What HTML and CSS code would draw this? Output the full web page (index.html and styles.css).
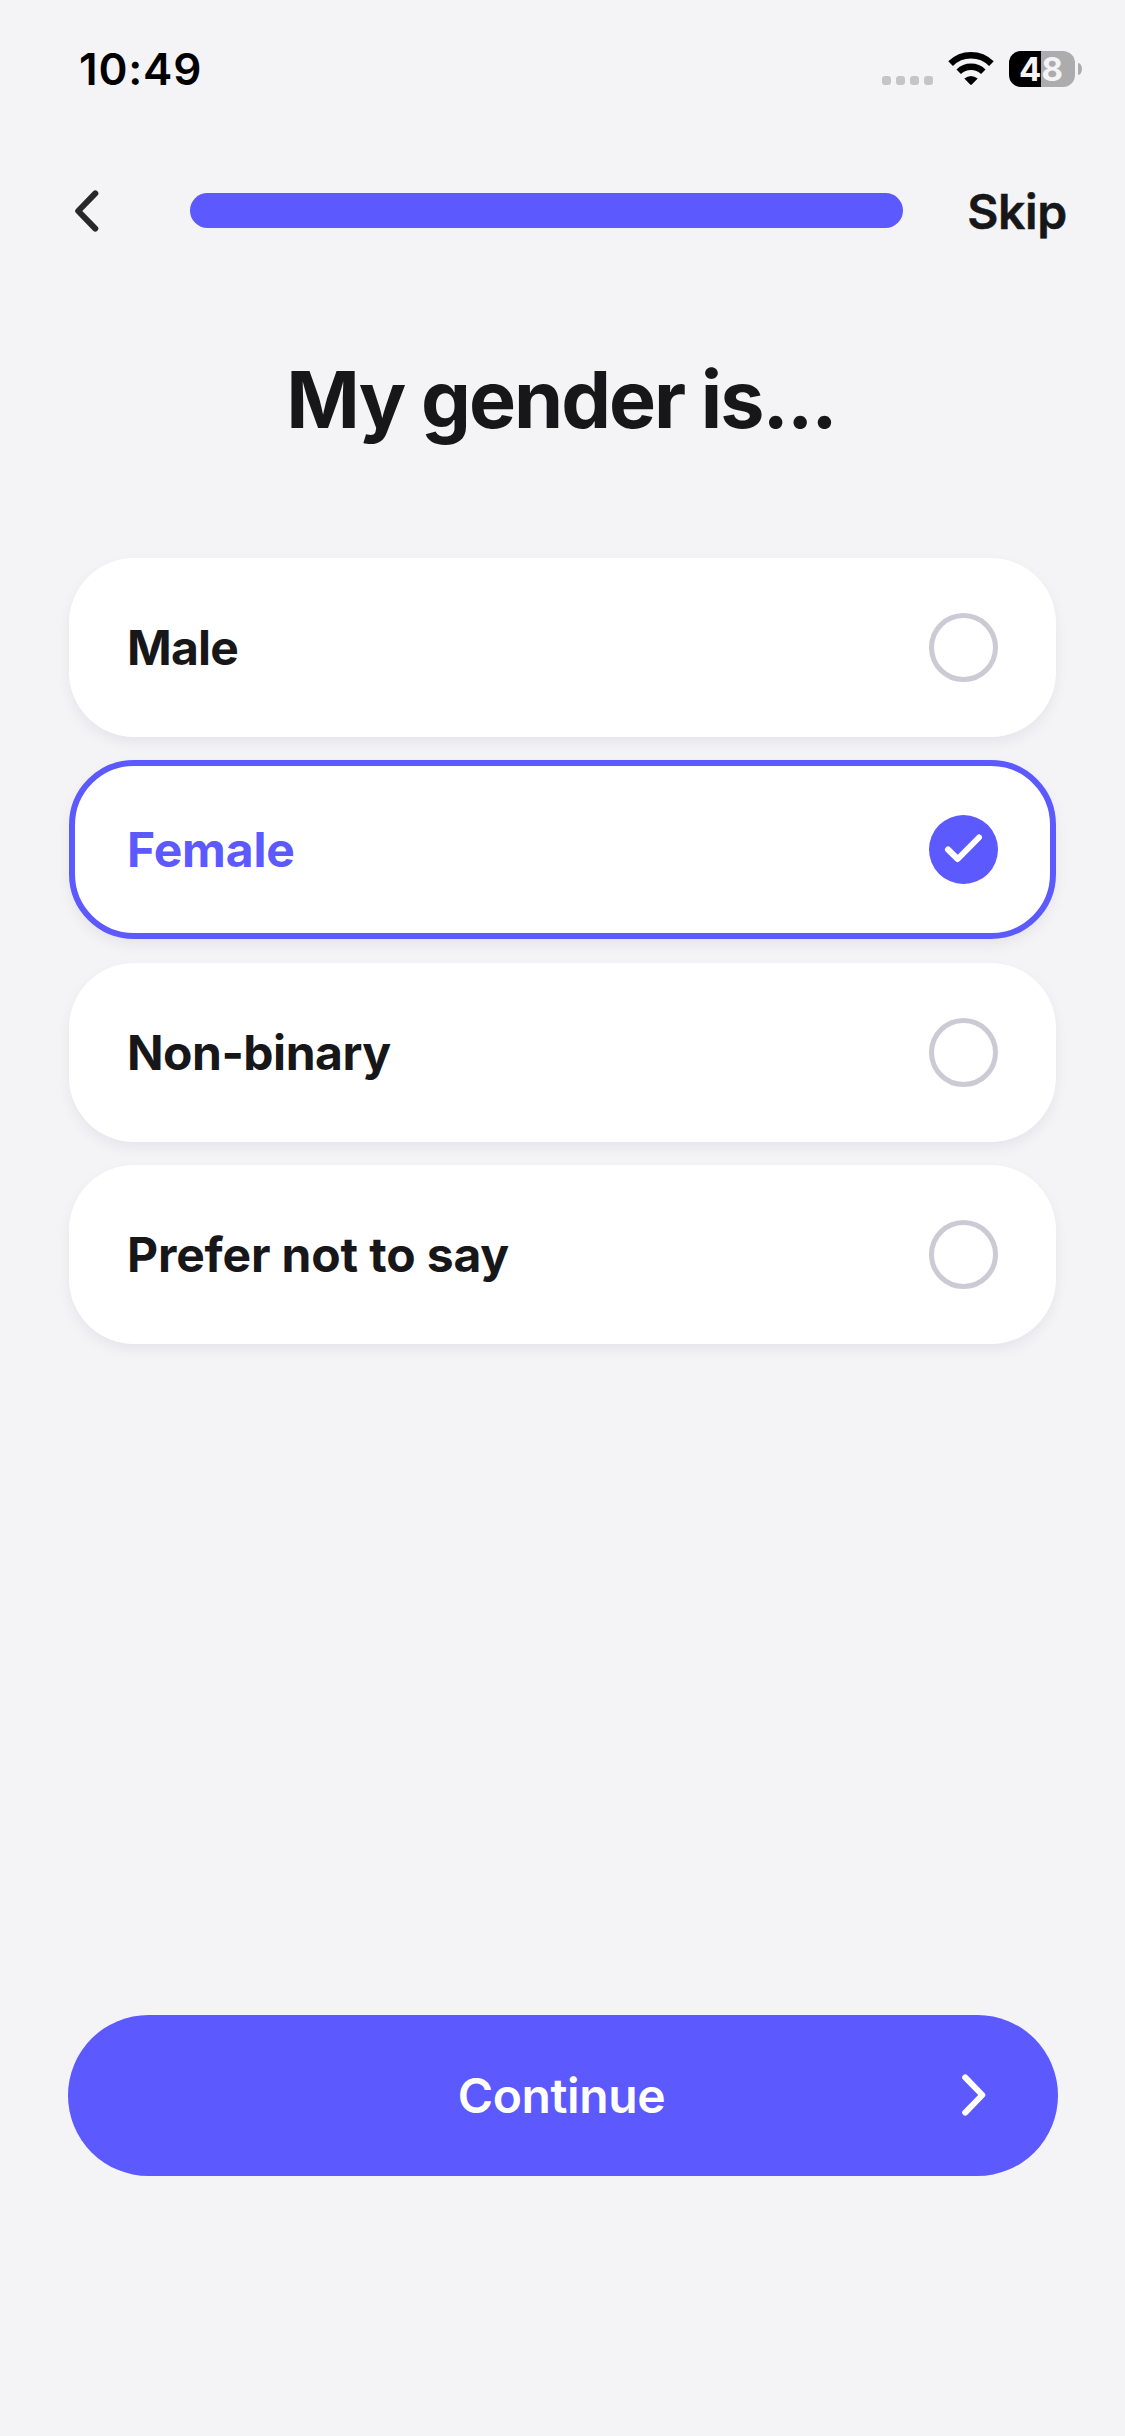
FILE: index.html
```html
<!DOCTYPE html>
<html lang="en">
<head>
<meta charset="utf-8">
<title>My gender is...</title>
<link rel="stylesheet" href="styles.css">
</head>
<body>
<div class="screen">
  <header class="status">
    <span class="time">10:49</span>
    <div class="indicators">
      <div class="signal"><i></i><i></i><i></i><i></i></div>
      <svg class="wifi" viewBox="0 0 46 34" width="46" height="34">
        <path d="M2.6 11.7 A29 29 0 0 1 43.4 11.7" fill="none" stroke="#000" stroke-width="6.6"/>
        <path d="M10.7 19.8 A17.6 17.6 0 0 1 35.3 19.8" fill="none" stroke="#000" stroke-width="6.4"/>
        <path d="M16.3 26.6 Q23 21.6 29.7 26.6 L23.8 32.6 Q23 33.3 22.2 32.6 Z"/>
      </svg>
      <div class="battery"><span class="level">48</span><i class="nub"></i></div>
    </div>
  </header>
  <nav class="nav">
    <svg class="back" viewBox="0 0 24 42" width="24" height="42"><path d="M20.3 3.4 L3.2 21 L20.3 38.6"/></svg>
    <div class="progress"></div>
    <span class="skip">Skip</span>
  </nav>
  <h1 class="title">My gender is...</h1>
  <main class="options">
    <div class="option"><span class="label male">Male</span><span class="radio"></span></div>
    <div class="option selected"><span class="label female">Female</span><span class="radio"><svg viewBox="0 0 69 69" width="69" height="69"><path d="M19 34.5 L28.7 44 L50 22.5"/></svg></span></div>
    <div class="option"><span class="label nonbinary">Non-binary</span><span class="radio"></span></div>
    <div class="option"><span class="label prefer">Prefer not to say</span><span class="radio"></span></div>
  </main>
  <button class="continue"><span class="cta">Continue</span><svg class="next" viewBox="0 0 24 42" width="24" height="42"><path d="M3.2 3.4 L20.3 21 L3.2 38.6"/></svg></button>
</div>
</body>
</html>
```
FILE: styles.css
```css
* { box-sizing: border-box; }
body { margin: 0; background: #f4f4f7; font-family: Inter, "Liberation Sans", sans-serif; color: #17171a; }
.screen { width: 1125px; height: 2436px; display: flex; flex-direction: column; overflow: hidden; }
svg { display: block; flex: none; }

.status { height: 138px; padding: 0 43px 0 79px; display: flex; align-items: center; justify-content: space-between; }
.time { font-size: 44px; font-weight: 600; line-height: 54px; letter-spacing: .8px; color: #000; }
.indicators { display: flex; align-items: center; }
.signal { display: flex; gap: 5px; margin: 23px 15px 0 0; }
.signal i { width: 9px; height: 9px; border-radius: 3px; background: #c5c5c8; }
.battery { position: relative; width: 66px; height: 36px; margin: 0 7px 0 15px; border-radius: 12px; background: linear-gradient(90deg, #000 32px, #acacae 32px); display: flex; align-items: center; justify-content: center; }
.level { margin-left: -2px; font-size: 33px; line-height: 36px; font-weight: 700; color: #f4f4f7; }
.nub { position: absolute; left: 69px; top: 12px; width: 4px; height: 12px; border-radius: 0 4px 4px 0 / 0 6px 6px 0; background: #acacae; }

.nav { height: 145px; padding: 0 58px 0 75px; display: flex; align-items: center; }
.back path, .next path, .radio path { fill: none; stroke-linecap: round; stroke-linejoin: round; stroke-width: 6; }
.back path { stroke: #28282b; }
.progress { width: 714px; height: 35px; margin-left: 91px; border-radius: 18px; background: #5c59fe; }
.skip { margin-left: 64px; padding-top: 3px; font-size: 48px; line-height: 58px; font-weight: 600; letter-spacing: -.3px; white-space: nowrap; -webkit-text-stroke: .5px #17171a; }

.title { margin: 68px 0 0; height: 96px; line-height: 96px; font-size: 79px; font-weight: 700; letter-spacing: -2px; text-align: center; white-space: nowrap; padding-right: 3px; }

.options { margin: 111px 69px 0; display: flex; flex-direction: column; gap: 23.3px; }
.option { height: 179px; padding: 0 58px 0 58px; border-radius: 65px; background: #fff; display: flex; align-items: center; justify-content: space-between; box-shadow: 0 6px 14px rgba(20, 20, 40, .06); }
.option.selected { border: 6px solid #5c59fe; padding: 0 52px 0 52px; }
.label { padding-top: 1px; font-size: 48px; line-height: 58px; font-weight: 700; letter-spacing: -.15px; }
.male { letter-spacing: -.8px; }
.nonbinary { letter-spacing: -.5px; }
.selected .label { color: #5c59fe; }
.radio { width: 69px; height: 69px; flex: none; border: 5.5px solid #cbcad5; border-radius: 50%; }
.selected .radio { border: 0; background: #5c59fe; }
.radio path { stroke: #fff; }

.continue { width: 990px; height: 161px; margin: 671px 0 0 68px; padding: 0; border: 0; border-radius: 81px; background: #5c59fe; color: #fff; font-family: inherit; display: grid; grid-template-columns: 96px 1fr 96px; align-items: center; }
.cta { grid-column: 2; padding: 1px 3px 0 0; font-size: 48px; line-height: 58px; font-weight: 600; letter-spacing: -.4px; }
.next path { stroke: #fff; }
```
